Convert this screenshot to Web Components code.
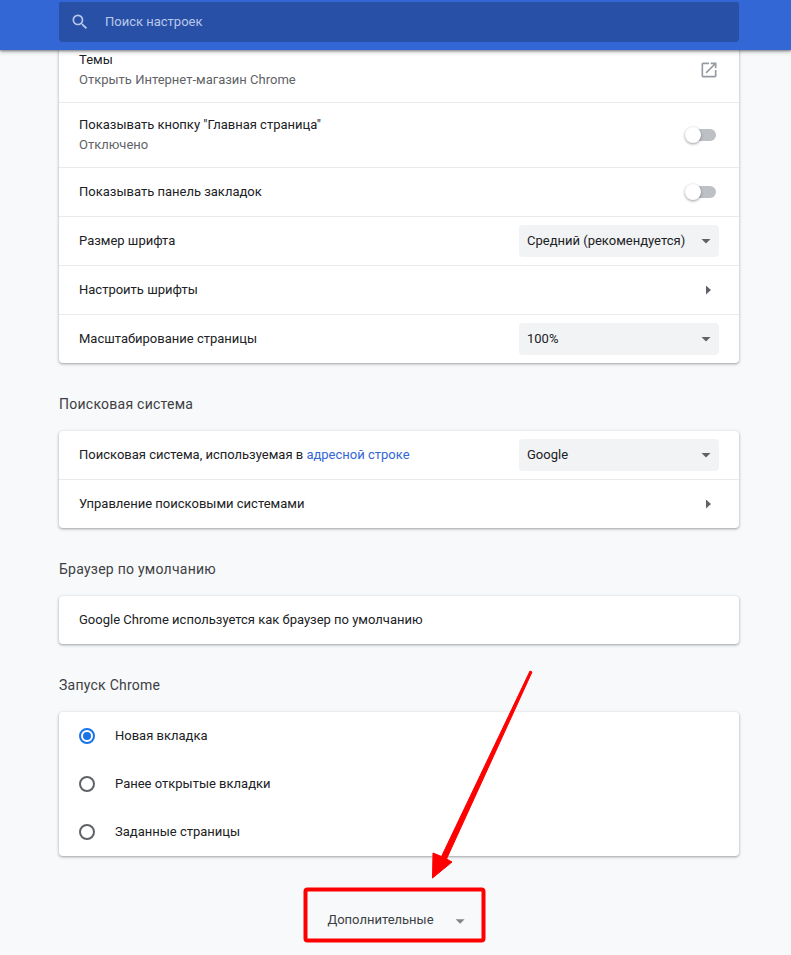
<!DOCTYPE html>
<html lang="ru">
<head>
<meta charset="utf-8">
<title>Настройки</title>
<style>
  html, body { margin: 0; height: 955px; overflow: hidden; background: #f8f9fa; }
  body { font: 13px/20px Roboto, "Liberation Sans", sans-serif; color: #202124; }
</style>
</head>
<body>
<settings-page>
  <settings-toolbar slot="toolbar" placeholder="Поиск настроек"></settings-toolbar>

  <settings-card>
    <settings-row tall>
      Темы
      <span slot="sub">Открыть Интернет-магазин Chrome</span>
      <open-icon slot="control"></open-icon>
    </settings-row>
    <settings-row tall divider>
      Показывать кнопку "Главная страница"
      <span slot="sub">Отключено</span>
      <toggle-switch slot="control"></toggle-switch>
    </settings-row>
    <settings-row divider>
      Показывать панель закладок
      <toggle-switch slot="control"></toggle-switch>
    </settings-row>
    <settings-row divider>
      Размер шрифта
      <select-box slot="control">Средний (рекомендуется)</select-box>
    </settings-row>
    <settings-row divider>
      Настроить шрифты
      <arrow-right slot="control"></arrow-right>
    </settings-row>
    <settings-row divider>
      Масштабирование страницы
      <select-box slot="control">100%</select-box>
    </settings-row>
  </settings-card>

  <section-title>Поисковая система</section-title>
  <settings-card>
    <settings-row>
      <span>Поисковая система, используемая в <blue-link>адресной строке</blue-link></span>
      <select-box slot="control">Google</select-box>
    </settings-row>
    <settings-row divider>
      Управление поисковыми системами
      <arrow-right slot="control"></arrow-right>
    </settings-row>
  </settings-card>

  <section-title>Браузер по умолчанию</section-title>
  <settings-card>
    <settings-row>Google Chrome используется как браузер по умолчанию</settings-row>
  </settings-card>

  <section-title>Запуск Chrome</section-title>
  <settings-card>
    <radio-row checked>Новая вкладка</radio-row>
    <radio-row>Ранее открытые вкладки</radio-row>
    <radio-row>Заданные страницы</radio-row>
  </settings-card>

  <advanced-toggle>Дополнительные</advanced-toggle>
  <red-annotation slot="overlay"></red-annotation>
</settings-page>

<script>
// Small helper: every element gets an open shadow root with its own markup
function defineElement(name, html) {
  customElements.define(name, class extends HTMLElement {
    constructor() {
      super();
      this.attachShadow({ mode: 'open' });
      this.shadowRoot.innerHTML = typeof html === 'function' ? html(this) : html;
    }
  });
}

defineElement('settings-page', `
  <style>
    :host { display: block; position: relative; width: 791px; height: 955px; overflow: hidden; }
    main { display: flex; flex-direction: column; width: 680px; margin-left: 59px; padding-top: 38px; }
  </style>
  <main><slot></slot></main>
  <slot name="toolbar"></slot>
  <slot name="overlay"></slot>
`);

defineElement('settings-toolbar', el => `
  <style>
    :host {
      display: block; position: absolute; top: 0; left: 0; right: 0; height: 50px; z-index: 2;
      background: #3367d6; box-shadow: 0 1px 2px rgba(60,64,67,.5), 0 2px 4px rgba(60,64,67,.3);
    }
    .search {
      display: flex; align-items: center; box-sizing: border-box;
      width: 680px; height: 40px; margin: 2px 0 0 59px; padding-left: 11px;
      background: #2850a7; border-radius: 2px 2px 4px 4px;
      color: #b9c8e9;
    }
    svg { width: 20px; height: 20px; margin-right: 15px; fill: #b9c8e9; }
  </style>
  <div class="search">
    <svg viewBox="0 0 24 24"><path d="M15.5 14h-.79l-.28-.27A6.47 6.47 0 0 0 16 9.5 6.5 6.5 0 1 0 9.5 16c1.61 0 3.09-.59 4.23-1.57l.27.28v.79l5 4.99L20.49 19l-4.99-5zm-6 0C7.01 14 5 11.99 5 9.5S7.01 5 9.5 5 14 7.01 14 9.5 11.99 14 9.5 14z"/></svg>
    <span>${el.getAttribute('placeholder')}</span>
  </div>
`);

defineElement('settings-card', `
  <style>
    :host {
      display: block; background: #fff; border-radius: 4px;
      box-shadow: 0 1px 2px rgba(60,64,67,.3), 0 1px 3px 1px rgba(60,64,67,.15);
    }
  </style>
  <slot></slot>
`);

defineElement('settings-row', `
  <style>
    :host {
      display: flex; align-items: center; justify-content: space-between; box-sizing: content-box;
      height: 48px; padding: 0 20px;
    }
    :host([tall]) { height: 64px; }
    :host([divider]) { border-top: 1px solid #e8eaed; }
    ::slotted([slot="sub"]) { display: block; color: #5f6368; }
    .control { display: flex; align-items: center; }
  </style>
  <div class="label"><slot></slot><slot name="sub"></slot></div>
  <div class="control"><slot name="control"></slot></div>
`);

defineElement('section-title', `
  <style>
    :host {
      display: flex; align-items: flex-end; height: 68px; box-sizing: border-box; padding-bottom: 17px;
      color: #3c4043; font-size: 14px; letter-spacing: .25px;
    }
  </style>
  <slot></slot>
`);

defineElement('blue-link', `<style>:host { color: #3367d6; }</style><slot></slot>`);

defineElement('open-icon', `
  <style>:host { display: block; width: 20px; height: 20px; } svg { display: block; fill: #969ba1; }</style>
  <svg viewBox="0 0 24 24" width="20" height="20"><path d="M19 19H5V5h7V3H5c-1.11 0-2 .9-2 2v14c0 1.1.89 2 2 2h14c1.1 0 2-.9 2-2v-7h-2v7zM14 3v2h3.59l-9.83 9.83 1.41 1.41L19 6.41V10h2V3h-7z"/></svg>
`);

defineElement('toggle-switch', `
  <style>
    :host { display: block; position: relative; width: 31px; height: 16px; margin-right: 3px; }
    .track { position: absolute; left: 1px; right: 0; top: 2px; height: 12px; border-radius: 6px; background: #bdc1c6; }
    .thumb {
      position: absolute; left: 0; top: 0; width: 16px; height: 16px; border-radius: 50%;
      background: #fff; box-shadow: 0 1px 3px rgba(0,0,0,.4);
    }
  </style>
  <div class="track"></div><div class="thumb"></div>
`);

defineElement('select-box', `
  <style>
    :host {
      display: flex; align-items: center; justify-content: space-between; box-sizing: border-box;
      width: 200px; height: 32px; padding: 0 8px; border-radius: 4px; background: #f1f3f4;
    }
    i { width: 10px; height: 5px; background: #5f6368; clip-path: polygon(0 0, 100% 0, 50% 100%); }
  </style>
  <span><slot></slot></span><i></i>
`);

defineElement('arrow-right', `
  <style>
    :host { display: block; width: 5px; height: 9px; margin-right: 8px; background: #5f6368; clip-path: polygon(0 0, 100% 50%, 0 100%); }
  </style>
`);

defineElement('radio-row', `
  <style>
    :host { display: flex; align-items: center; height: 48px; padding-left: 20px; }
    .circle {
      display: flex; align-items: center; justify-content: center; box-sizing: border-box;
      width: 16px; height: 16px; margin-right: 20px; border: 2px solid #5f6368; border-radius: 50%;
    }
    :host([checked]) .circle { border-color: #1a73e8; }
    :host([checked]) .circle::after { content: ""; width: 8px; height: 8px; border-radius: 50%; background: #1a73e8; }
  </style>
  <div class="circle"></div><slot></slot>
`);

defineElement('advanced-toggle', `
  <style>
    :host {
      display: flex; align-items: center; justify-content: center; gap: 22px;
      height: 32px; margin-top: 47px; padding: 1px 6px 0 0; color: #3c4043;
    }
    i { width: 9px; height: 4.5px; margin-top: 3px; background: #80868b; clip-path: polygon(0 0, 100% 0, 50% 100%); }
  </style>
  <span><slot></slot></span><i></i>
`);

// Red marks drawn over the screenshot by hand
defineElement('red-annotation', `
  <style>
    :host { display: block; position: absolute; inset: 0; z-index: 3; pointer-events: none; }
    svg { position: absolute; left: 0; top: 0; }
  </style>
  <svg width="791" height="955" viewBox="0 0 791 955">
    <rect x="305.5" y="889.5" width="178" height="51" rx="2" fill="none" stroke="#fe0000" stroke-width="4"/>
    <path d="M530 671 L532 672 L446.5 859 L452 862 L432.5 878 L433 853 L441.5 856.5 Z" fill="#fe0000" stroke="#fe0000" stroke-linejoin="round"/>
  </svg>
`);
</script>
</body>
</html>
